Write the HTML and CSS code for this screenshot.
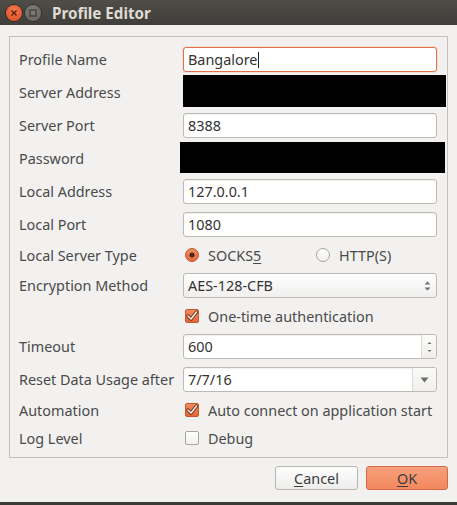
FILE: index.html
```html
<!DOCTYPE html>
<html lang="en">
<head>
    <meta charset="UTF-8">
    <title>Profile Editor</title>
    <link rel="stylesheet" href="styles.css">
</head>
<body>
    <div class="window">
        <div class="titlebar">
            <span class="wbtn close">
                <svg width="8" height="8" viewBox="0 0 8 8"><path d="M1.5 1.5 L6.5 6.5 M6.5 1.5 L1.5 6.5" stroke="#5a1a0a" stroke-width="1.3"/></svg>
            </span>
            <span class="wbtn minim">
                <svg width="8" height="8" viewBox="0 0 8 8"><rect x="1" y="1" width="6" height="6" fill="none" stroke="#3a3935" stroke-width="1.2"/></svg>
            </span>
            <span class="title">Profile Editor</span>
        </div>

        <div class="content">
            <div class="group">
                <div class="form">
                    <label>Profile Name</label>
                    <div class="input focused">Bangalore<span class="caret"></span></div>

                    <label>Server Address</label>
                    <div class="redact addr"></div>

                    <label>Server Port</label>
                    <div class="input">8388</div>

                    <label>Password</label>
                    <div class="redact pass"></div>

                    <label>Local Address</label>
                    <div class="input">127.0.0.1</div>

                    <label>Local Port</label>
                    <div class="input">1080</div>

                    <label>Local Server Type</label>
                    <div class="radios">
                        <span class="option"><span class="radio checked"></span><span>SOCKS<u>5</u></span></span>
                        <span class="option"><span class="radio"></span><span>HTTP(S)</span></span>
                    </div>

                    <label>Encryption Method</label>
                    <div class="input combo">
                        AES-128-CFB
                        <svg class="updown" width="7" height="12" viewBox="0 0 7 12"><path d="M0.5 4.5 L3.5 1.5 L6.5 4.5 Z M0.5 7.5 L3.5 10.5 L6.5 7.5 Z" fill="#6e6e6e"/></svg>
                    </div>

                    <span></span>
                    <span class="option"><span class="check checked"><svg width="14" height="14" viewBox="0 0 14 14"><path d="M3 7 L6 10 L11.5 3" fill="none" stroke="#6b3218" stroke-width="3.4" stroke-linecap="round" stroke-linejoin="round"/><path d="M3 7 L6 10 L11.5 3" fill="none" stroke="#f6e8e0" stroke-width="1.6" stroke-linecap="round" stroke-linejoin="round"/></svg></span><span>One-time authentication</span></span>

                    <label>Timeout</label>
                    <div class="input spin">
                        <span class="value">600</span>
                        <span class="side">
                            <svg width="7" height="14" viewBox="0 0 7 14"><path d="M1.5 4 L3.5 2 L5.5 4 Z M1.5 10 L3.5 12 L5.5 10 Z" fill="#6e6e6e"/></svg>
                        </span>
                    </div>

                    <label>Reset Data Usage after</label>
                    <div class="input date">
                        <span class="value">7/7/16</span>
                        <span class="side">
                            <svg width="9" height="6" viewBox="0 0 9 6"><path d="M0.5 0.5 L8.5 0.5 L4.5 5.5 Z" fill="#6e6e6e"/></svg>
                        </span>
                    </div>

                    <label>Automation</label>
                    <span class="option"><span class="check checked"><svg width="14" height="14" viewBox="0 0 14 14"><path d="M3 7 L6 10 L11.5 3" fill="none" stroke="#6b3218" stroke-width="3.4" stroke-linecap="round" stroke-linejoin="round"/><path d="M3 7 L6 10 L11.5 3" fill="none" stroke="#f6e8e0" stroke-width="1.6" stroke-linecap="round" stroke-linejoin="round"/></svg></span><span>Auto connect on application start</span></span>

                    <label>Log Level</label>
                    <span class="option"><span class="check"></span><span>Debug</span></span>
                </div>
            </div>

            <div class="buttons">
                <button class="btn"><u>C</u>ancel</button>
                <button class="btn primary"><u>O</u>K</button>
            </div>
        </div>
    </div>
</body>
</html>
```

FILE: styles.css
```css
html {
    background: #3a3a38;
}

body {
    margin: 0;
    font-family: "Noto Sans", "Open Sans", sans-serif;
    font-size: 14.4px;
    color: #4a4a4a;
}

.window {
    width: 457px;
    height: 502px;
    background: #f2f1f0;
}

.titlebar {
    height: 25px;
    display: flex;
    align-items: center;
    padding-left: 6px;
    background: linear-gradient(#4f4d48, #3f3e3a);
}

.wbtn {
    width: 16px;
    height: 16px;
    border-radius: 50%;
    display: flex;
    align-items: center;
    justify-content: center;
    margin-right: 3px;
}

.wbtn.close {
    background: radial-gradient(circle at 50% 35%, #f37a52, #de4a20);
    box-shadow: 0 0 0 1px #3a2a22;
}

.wbtn.minim {
    background: radial-gradient(circle at 50% 35%, #807e78, #63615c);
    box-shadow: 0 0 0 1px #35342f;
}

.title {
    margin-left: 8px;
    font-weight: bold;
    font-size: 15.2px;
    color: #dfdbd2;
}

.content {
    padding: 11px 9px 0 9px;
}

.group {
    border: 1px solid #c4c1bc;
    padding: 10px 10px 9px 9px;
}

.form {
    display: grid;
    grid-template-columns: 164px 254px;
    row-gap: 8px;
    align-items: center;
}

label {
    white-space: nowrap;
}

.input {
    height: 25px;
    box-sizing: border-box;
    border: 1px solid #bdb9b3;
    border-radius: 3px;
    background: #fff;
    box-shadow: inset 0 1px 1px rgba(0,0,0,0.06);
    padding: 0 4px;
    display: flex;
    align-items: center;
    color: #333;
    position: relative;
}

.input.focused {
    border-color: #e2714a;
    box-shadow: 0 0 0 1px rgba(226,113,74,0.15);
}

.caret {
    display: inline-block;
    width: 1px;
    height: 16px;
    background: #222;
    margin-left: 1px;
}

.redact {
    background: #000;
}

.redact.addr {
    height: 32px;
    margin: -5px -9px -2px 0;
}

.redact.pass {
    height: 31px;
    margin: -4px -8px -2px -3px;
}

.combo {
    justify-content: space-between;
    background: linear-gradient(#fdfdfd, #f1f0ef);
    box-shadow: none;
}

.updown {
    margin-right: 1px;
}

.spin, .date {
    padding-right: 0;
}

.value {
    flex: 1;
}

.side {
    align-self: stretch;
    display: flex;
    align-items: center;
    justify-content: center;
    border-left: 1px solid #dddad6;
    background: linear-gradient(#fbfbfa, #f0efee);
    border-radius: 0 2px 2px 0;
}

.spin .side {
    width: 14px;
}

.date .side {
    width: 23px;
}

.radios {
    display: grid;
    grid-template-columns: 131px auto;
    padding-left: 2px;
}

.option {
    display: flex;
    align-items: center;
    gap: 9px;
    padding-left: 2px;
    height: 20px;
    white-space: nowrap;
}

.radios .option {
    padding-left: 0;
}

.radio {
    width: 14px;
    height: 14px;
    box-sizing: border-box;
    border-radius: 50%;
    border: 1px solid #a8a49e;
    background: linear-gradient(#ffffff, #f1f0ef);
    flex: none;
}

.radio.checked {
    border-color: #c45628;
    background: radial-gradient(circle, #4a2515 0, #4a2515 2.2px, transparent 2.8px), linear-gradient(#f28a60, #e4663a);
}

.check {
    width: 14px;
    height: 14px;
    box-sizing: border-box;
    border: 1px solid #a8a49e;
    border-radius: 2px;
    background: linear-gradient(#ffffff, #f1f0ef);
    position: relative;
    flex: none;
}

.check.checked {
    border-color: #c45628;
    background: linear-gradient(#f28a60, #e4663a);
}

.check svg {
    position: absolute;
    left: -1px;
    top: -1px;
}

u {
    text-decoration-thickness: 1px;
    text-underline-offset: 2px;
}

.buttons {
    display: flex;
    justify-content: flex-end;
    gap: 8px;
    margin-top: 8px;
}

.btn {
    width: 83px;
    height: 24px;
    font-family: inherit;
    font-size: 14.4px;
    color: #3c3c3c;
    border: 1px solid #b9b5af;
    border-radius: 3px;
    background: linear-gradient(#fdfdfd, #eeedec);
    padding: 0;
}

.btn.primary {
    width: 82px;
    border-color: #d06a44;
    background: linear-gradient(#f7a07c, #f2885f);
}
```
